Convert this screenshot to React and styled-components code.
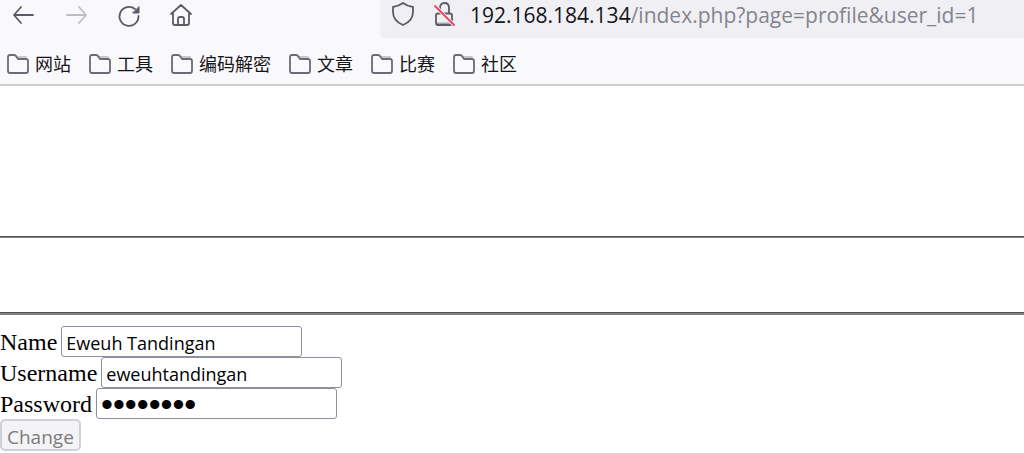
import React from "react";
import styled, { createGlobalStyle } from "styled-components";

const GlobalStyle = createGlobalStyle`
  * { box-sizing: border-box; }
  body { margin: 0; background: #fff; }
`;

const Chrome = styled.header`
  background: #f9f9fb;
  border-bottom: 2px solid #ccc;
  font-family: "Open Sans", "Noto Sans CJK SC", sans-serif;
  color: #15141a;
`;

const Toolbar = styled.div`
  display: flex;
  height: 38px;
`;

const NavButtons = styled.nav`
  display: flex;
  flex: 0 0 380px;
  gap: 25px;
  padding: 1px 0 0 8px;
`;

const IconButton = styled.button`
  display: flex;
  width: 28px;
  height: 28px;
  padding: 0;
  border: 0;
  background: none;
  color: #5b5b66;
  &:disabled { color: #bdbdc2; }
`;

const Icon = styled.svg`
  flex: none;
  fill: none;
  stroke: currentColor;
  stroke-width: 1.8;
  stroke-linecap: round;
  stroke-linejoin: round;
`;

const AddressBar = styled.div`
  display: flex;
  flex: 1;
  min-width: 0;
  padding-left: 9px;
  background: #f0f0f4;
  border-radius: 0 0 0 5px;
  color: #5b5b66;
`;

const SiteIcons = styled.div`
  display: flex;
  gap: 13px;
  padding-top: 1px;
`;

const Url = styled.div`
  padding-left: 12px;
  font-size: 21px;
  line-height: 30px;
  white-space: nowrap;
  color: #84848c;
`;

const Host = styled.span`
  color: #15141a;
`;

const Bookmarks = styled.nav`
  display: flex;
  gap: 17px;
  height: 46px;
  padding: 5px 6px 0;
`;

const Bookmark = styled.a`
  display: flex;
  align-items: center;
  gap: 5px;
  font-size: 18px;
  line-height: 24px;
  white-space: nowrap;
  color: inherit;
  text-decoration: none;
`;

const Page = styled.main`
  padding-top: 150px;
  font-family: "Liberation Serif", serif;
  font-size: 24px;
  color: #000;
`;

const Rule = styled.hr`
  height: ${(p) => p.$size}px;
  margin: 0 0 ${(p) => p.$after}px;
  border: 0;
  border-top: 1px solid #555;
  background: #808080;
`;

const Field = styled.div`
  display: flex;
  align-items: center;
  gap: 4px;
  height: 31px;
`;

const Label = styled.label`
  padding-top: 2px;
`;

const TextInput = styled.input`
  width: 241px;
  height: 31px;
  padding: 2px 4px 0;
  border: 1px solid #8f8f9d;
  border-radius: 3px;
  background: #fff;
  color: #000;
  font-family: "Open Sans", sans-serif;
  font-size: 18px;
  &[type="password"] {
    font-family: "Liberation Sans", sans-serif;
    font-size: 34px;
  }
`;

const ChangeButton = styled.button`
  display: block;
  height: 32px;
  padding: 3px 5px 0;
  border: 2px solid #d0d0d7;
  border-radius: 5px;
  background: #f4f4f6;
  color: #7c7c7c;
  font-family: "Open Sans", sans-serif;
  font-size: 19px;
  line-height: 24px;
`;

const folders = ["网站", "工具", "编码解密", "文章", "比赛", "社区"];

const fields = [
  { id: "name", label: "Name", type: "text", value: "Eweuh Tandingan" },
  { id: "username", label: "Username", type: "text", value: "eweuhtandingan" },
  { id: "password", label: "Password", type: "password", value: "password" },
];

function FolderIcon() {
  return (
    <Icon width="24" height="24" viewBox="0 0 24 24" aria-hidden="true">
      <path d="M11 5h9" stroke="#c8c8cd" />
      <path
        d="M2 5q0-2 2-2h4q1 0 2 1l2 3h8q2 0 2 2v10q0 2-2 2H4q-2 0-2-2z"
        stroke="#6b6b75"
      />
    </Icon>
  );
}

export default function App() {
  return (
    <>
      <GlobalStyle />
      <Chrome>
        <Toolbar>
          <NavButtons>
            <IconButton type="button" aria-label="Back">
              <Icon width="28" height="28" viewBox="0 0 28 28">
                <path d="M6 14h19M13 6l-7 8 7 8" />
              </Icon>
            </IconButton>
            <IconButton type="button" aria-label="Forward" disabled>
              <Icon width="28" height="28" viewBox="0 0 28 28">
                <path d="M6 14h19M18 6l7 8-7 8" />
              </Icon>
            </IconButton>
            <IconButton type="button" aria-label="Reload">
              <Icon width="28" height="28" viewBox="0 0 28 28">
                <path d="M21 8A9.500 9.500 0 1 0 24.500 15" />
                <path d="M25 6v6h-6z" fill="currentColor" strokeWidth="1" />
              </Icon>
            </IconButton>
            <IconButton type="button" aria-label="Home">
              <Icon width="28" height="28" viewBox="0 0 28 28">
                <path d="M4 13L14 4l10 9M6 12v10q0 2 2 2h12q2 0 2-2V12M11 24v-6q0-2 2-2h2q2 0 2 2v6" />
              </Icon>
            </IconButton>
          </NavButtons>
          <AddressBar>
            <SiteIcons>
              <Icon width="28" height="28" viewBox="0 0 28 28" aria-hidden="true">
                <path d="M14 2Q18 5 24 6V11Q24 20 14 24Q4 20 4 11V6Q10 5 14 2z" />
              </Icon>
              <Icon width="28" height="28" viewBox="0 0 28 28" aria-hidden="true">
                <path d="M7 22.500h15" stroke="#a4a4aa" />
                <path d="M10 12V7q0-5 4.500-5T19 7v5M8 12.500h12q2 0 2 2V22q0 2-2 2H8q-2 0-2-2v-7.500q0-2 2-2z" />
                <path d="M5 5l19 19" stroke="#f0f0f4" strokeWidth="3.800" />
                <path d="M5 5l19 19" stroke="#e9426a" />
              </Icon>
            </SiteIcons>
            <Url>
              <Host>192.168.184.134</Host>/index.php?page=profile&amp;user_id=1
            </Url>
          </AddressBar>
        </Toolbar>
        <Bookmarks aria-label="Bookmarks">
          {folders.map((name) => (
            <Bookmark href="#" key={name}>
              <FolderIcon />
              {name}
            </Bookmark>
          ))}
        </Bookmarks>
      </Chrome>
      <Page>
        <Rule $size={2} $after={74} />
        <Rule $size={3} $after={11} />
        <form>
          {fields.map((f) => (
            <Field key={f.id}>
              <Label htmlFor={f.id}>{f.label}</Label>
              <TextInput id={f.id} type={f.type} defaultValue={f.value} />
            </Field>
          ))}
          <ChangeButton type="button" disabled>
            Change
          </ChangeButton>
        </form>
      </Page>
    </>
  );
}
